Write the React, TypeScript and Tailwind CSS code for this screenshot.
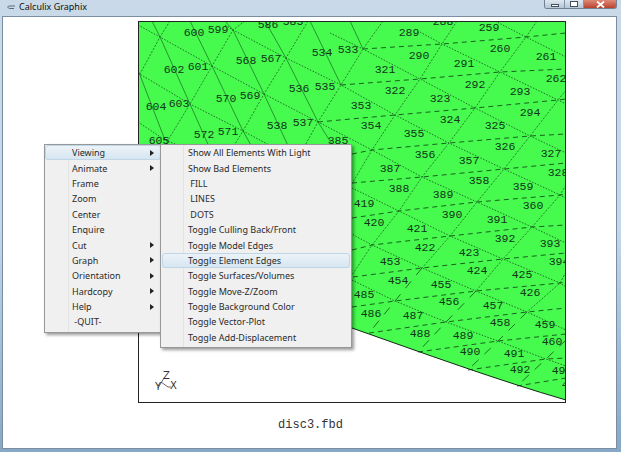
const labels: [string, number, number][] = [
  ["600", 194, 32], ["599", 218, 29], ["586", 268, 24], ["585", 293, 21], ["602", 174, 69], ["601", 198, 66],
  ["568", 246, 60], ["567", 271, 58], ["536", 299, 88], ["535", 325, 86], ["604", 156, 106], ["603", 179, 103],
  ["570", 226, 98], ["569", 250, 95], ["538", 277, 125], ["537", 303, 122], ["605", 159, 140], ["572", 204, 134],
  ["571", 228, 131], ["534", 322, 52], ["533", 348, 49], ["289", 409, 32], ["288", 443, 21], ["259", 489, 27],
  ["260", 500, 48], ["290", 419, 55], ["291", 464, 63], ["261", 546, 56], ["321", 385, 69], ["322", 395, 90],
  ["323", 440, 98], ["292", 475, 84], ["293", 520, 91], ["262", 556, 78], ["353", 361, 105], ["354", 371, 125],
  ["324", 450, 119], ["325", 495, 125], ["294", 530, 112], ["355", 414, 133], ["385", 338, 140], ["326", 505, 146],
  ["356", 425, 154], ["357", 469, 160], ["327", 551, 153], ["328", 558, 172], ["387", 390, 168], ["358", 479, 180],
  ["388", 399, 188], ["389", 443, 194], ["359", 523, 186], ["360", 533, 205], ["419", 364, 203], ["420", 374, 222],
  ["390", 452, 214], ["391", 497, 219], ["421", 417, 228], ["392", 505, 238], ["393", 550, 243], ["422", 425, 247],
  ["423", 469, 252], ["394", 559, 261], ["453", 390, 261], ["424", 477, 270], ["425", 522, 274], ["454", 398, 280],
  ["455", 441, 284], ["426", 530, 292], ["485", 364, 294], ["456", 449, 301], ["457", 493, 305], ["486", 371, 313],
  ["487", 413, 315], ["458", 500, 322], ["459", 545, 324], ["488", 420, 333], ["489", 463, 335], ["460", 552, 341],
  ["490", 470, 351], ["491", 514, 353], ["492", 520, 369], ["493", 562, 370], ["494", 572, 384],
];

// long lines running down to the right
const fineLines = [
  "138,25 160,37 212,66 264,94 318,122 372,150 422,177 477,202 532,227 566,243",
  "225,25 233,30 286,58 341,85 395,115 449,143 504,169 560,195 566,198",
  "330,33 363,49 420,79 475,108 530,136 566,153",
  "420,32 442,44 500,72 558,100 566,104",
  "495,21 526,37 566,57",
  "138,73 190,104 243,131 297,160 350,187 399,211 450,236 503,259 560,283 566,287",
  "138,122 165,140 215,160 372,245 422,268 476,291 527,312 566,330",
  "352,280 395,301 446,322 498,341 546,359 566,366",
];

// lines running down to the left, dotted in the upper part of the mesh
const crossLines = [
  "170,21 160,37 140,74",
  "245,21 233,30 212,66 190,104 165,145",
  "308,21 286,58 264,94 243,131 222,165",
  "383,21 363,49 341,85 318,122 297,160",
  "457,21 442,44 420,79 395,115 372,150 350,187",
  "537,21 526,37 500,72 475,108 449,143 422,177 399,211 372,245 352,275",
  "566,90 558,100 530,136 504,169 477,202 450,236 422,268",
  "566,185 560,195 532,227 503,259 476,291",
  "566,272 560,283 527,312",
];

// same family lower down, where the strokes are long with wide gaps
const crossLinesLow = [
  "422,268 395,301 369,333",
  "476,291 446,322 418,352",
  "527,312 498,341 468,370",
  "566,340 546,359 517,386",
];

// steep lines on the left of the mesh
const steepLines = [
  "152,21 160,37 190,104 215,160",
  "190,21 212,66 243,131 265,170",
  "225,21 233,30 264,94 290,150",
  "265,21 286,58 318,122 345,165",
  "310,21 341,85",
  "350,21 363,49",
  "138,70 165,140",
];

// nearly level dashed lines on the right
const dashLines = [
  "363,49 442,44 526,37 566,33",
  "341,85 420,79 500,72 566,69",
  "318,122 395,115 475,108 558,100 566,99",
  "352,154 372,150 449,143 530,136 566,134",
  "352,183 422,177 504,169 566,163",
  "352,218 399,211 477,202 560,195 566,194",
  "352,250 372,245 450,236 532,227 566,225",
  "353,277 422,268 503,259 566,253",
  "352,307 395,301 476,291 560,283 566,282",
  "369,333 446,322 527,312 566,308",
  "418,352 498,341 566,334",
  "468,370 546,359 566,358",
  "517,386 566,378",
];

function MeshCanvas() {
  return (
    <svg width="621" height="452" viewBox="0 0 621 452" className="block">
      <defs>
        <clipPath id="frame">
          <rect x="138" y="21" width="428" height="382" />
        </clipPath>
      </defs>
      <g clipPath="url(#frame)">
        <path d="M138 21H566V400C500 381 420 352 352 328L138 240Z" fill="#46fa4e" />
        <g fill="none" stroke="#14501a">
          {fineLines.map((p) => (
            <polyline key={p} points={p} strokeWidth="0.8" strokeDasharray="1.5 1.5" />
          ))}
          {crossLines.map((p) => (
            <polyline key={p} points={p} strokeWidth="0.7" strokeDasharray="2 1.5" />
          ))}
          {crossLinesLow.map((p) => (
            <polyline key={p} points={p} strokeWidth="0.8" strokeDasharray="9 8" />
          ))}
          {steepLines.map((p) => (
            <polyline key={p} points={p} strokeWidth="0.6" />
          ))}
          {dashLines.map((p) => (
            <polyline key={p} points={p} strokeWidth="0.9" strokeDasharray="5 4" />
          ))}
          <path d="M352 328C420 352 500 381 566 400" stroke="#0c2a10" strokeWidth="1" />
        </g>
        <g fill="#12361a" fontFamily="'Liberation Mono', monospace" fontSize="11.5" textAnchor="middle">
          {labels.map(([t, x, y]) => (
            <text key={t} x={x} y={y + 4}>
              {t}
            </text>
          ))}
        </g>
      </g>
      <rect x="138.5" y="21.5" width="427" height="381" fill="none" stroke="#222" />
      <path d="M158 388L164 378M161 382L168 387H171" fill="none" stroke="#444" strokeWidth="0.8" />
      <g fill="#333" fontFamily="'DejaVu Sans', sans-serif" fontSize="10">
        <text x="163" y="379">Z</text>
        <text x="170" y="389">X</text>
        <text x="155" y="390">Y</text>
      </g>
    </svg>
  );
}

const mainItems = [
  ["Viewing", true], ["Animate", true], ["Frame", false], ["Zoom", false], ["Center", false], ["Enquire", false],
  ["Cut", true], ["Graph", true], ["Orientation", true], ["Hardcopy", true], ["Help", true], [" -QUIT-", false],
] as const;

const subItems = [
  "Show All Elements With Light", "Show Bad Elements", " FILL", " LINES", " DOTS", "Toggle Culling Back/Front",
  "Toggle Model Edges", "Toggle Element Edges", "Toggle Surfaces/Volumes", "Toggle Move-Z/Zoom",
  "Toggle Background Color", "Toggle Vector-Plot", "Toggle Add-Displacement",
];

const hoverRow =
  "outline outline-1 -outline-offset-1 outline-[#bfd6e6] rounded-[3px] bg-gradient-to-b from-[#edf4f9] to-[#d5e5f0]";

function MainMenu() {
  return (
    <div className="absolute left-[44px] top-[144px] w-[118px] h-[189px] bg-[#f0f0f0] border border-[#979797] shadow-[2px_2px_3px_rgba(0,0,0,0.4)]">
      <div className="absolute left-[23px] top-0 bottom-0 w-px bg-[#e2e3e3]" />
      {mainItems.map(([name, sub], i) => (
        <div
          key={name}
          className={`relative h-[15.4px] flex items-center pl-[27px] pr-[5px] whitespace-pre ${i === 0 ? hoverRow : ""}`}
        >
          <span className="flex-1">{name}</span>
          {sub && <span className="w-0 h-0 border-y-[3px] border-y-transparent border-l-[4px] border-l-[#222] mr-[2px]" />}
        </div>
      ))}
    </div>
  );
}

function SubMenu() {
  return (
    <div className="absolute left-[160px] top-[144px] w-[192px] h-[204px] bg-[#f0f0f0] border border-[#979797] shadow-[2px_2px_3px_rgba(0,0,0,0.4)] px-px">
      <div className="absolute left-[22px] top-0 bottom-0 w-px bg-[#e2e3e3]" />
      {subItems.map((name, i) => (
        <div
          key={name}
          className={`relative h-[15.4px] flex items-center pl-[26px] whitespace-pre ${i === 7 ? hoverRow : ""}`}
        >
          {name}
        </div>
      ))}
    </div>
  );
}

function WindowButtons() {
  return (
    <div className="absolute right-[4px] top-0 h-[9px] flex border border-t-0 border-[#6f8193] rounded-b-[3px] overflow-hidden">
      <div className="w-[19px] bg-gradient-to-b from-[#dfe8f0] to-[#b5c6d6] flex items-end justify-center pb-[1px]">
        <div className="w-[8px] h-[3px] bg-white border border-[#45505c]" />
      </div>
      <div className="w-[19px] bg-gradient-to-b from-[#dfe8f0] to-[#b5c6d6] border-l border-[#8394a5] flex items-center justify-center">
        <div className="w-[8px] h-[6px] bg-white border border-[#45505c]" />
      </div>
      <div className="w-[33px] bg-gradient-to-b from-[#dd8a78] to-[#b8402c] border-l border-[#8394a5] flex items-center justify-center">
        <svg width="9" height="7" viewBox="0 0 9 7" stroke="#fff" strokeWidth="1.8">
          <path d="M1 0.500L8 6.500M8 0.500L1 6.500" />
        </svg>
      </div>
    </div>
  );
}

export default function App() {
  return (
    <div className="relative w-[621px] h-[452px] overflow-hidden bg-gradient-to-b from-[#c9d9e8] via-[#c4d8ea] to-[#86a8c6] font-['Noto_Sans',sans-serif]">
      <div className="h-[14px] flex items-center gap-[4px] pl-[7px] text-[9px] text-[#111]">
        <svg width="8" height="6" viewBox="0 0 8 6" fill="none" stroke="#5a6b78" strokeWidth="1">
          <path d="M8 2H3C2 2 1 2.500 0.500 3C1 3.500 2 4.500 3 4.500H7" />
        </svg>
        <span>Calculix Graphix</span>
      </div>
      <WindowButtons />
      <div className="absolute left-[2px] right-[4px] top-[16px] bottom-[3px] bg-white border border-[#7b8ea1]" />
      <div className="absolute inset-0">
        <MeshCanvas />
      </div>
      <div className="absolute inset-x-0 top-[418px] text-center font-['Liberation_Mono',monospace] text-[12px] leading-[14px] text-[#333]">
        disc3.fbd
      </div>
      <div className="text-[9px] text-[#2a2a2a] leading-none">
        <MainMenu />
        <SubMenu />
      </div>
    </div>
  );
}
